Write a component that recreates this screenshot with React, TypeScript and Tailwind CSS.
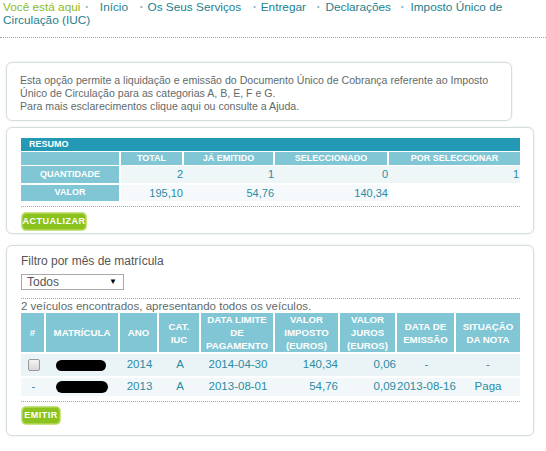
import React from "react";

const crumbs = [
  { label: "Início", pre: "ml-[5px] mr-[12px]" },
  { label: "Os Seus Serviços", pre: "ml-[12px] mr-[5px]" },
  { label: "Entregar", pre: "ml-[12px] mr-[5px]" },
  { label: "Declarações", pre: "ml-[11px] mr-[6px]" },
  { label: "Imposto Único de Circulação (IUC)", pre: "ml-[10px] mr-[7px]" },
];

const veiculos = [
  { sel: true, ano: "2014", cat: "A", limite: "2014-04-30", imposto: "140,34", juros: "0,06", emissao: "-", situacao: "-", bg: "bg-[#eaf4f7]", blob: "w-[50px] h-[11px]", h: "h-[24px]" },
  { sel: false, ano: "2013", cat: "A", limite: "2013-08-01", imposto: "54,76", juros: "0,09", emissao: "2013-08-16", situacao: "Paga", bg: "bg-[#f2f8fa]", blob: "w-[52px] h-[12px]", h: "h-[20px]" },
];

function Dotted() {
  return <div className="border-b border-dotted border-[#9aa]" />;
}

function GreenButton({ label, width }: { label: string; width: string }) {
  return (
    <div className={`${width} h-[17px] rounded-[4px] bg-[#8cc21e] ring-1 ring-[#c8e383] border border-[#a9d44a] flex items-center justify-center text-white text-[9px] font-bold tracking-[0.5px]`}>
      {label}
    </div>
  );
}

export default function App() {
  return (
    <div className="w-[546px] h-[451px] bg-white overflow-hidden font-['Liberation_Sans',sans-serif] text-[11px]">
      {/* breadcrumb */}
      <div className="px-[3px] text-[11.8px] leading-[13px] text-[#23808f]">
        <span className="text-[#8dbb1e]">Você está aqui</span>
        {crumbs.map((c) => (
          <span key={c.label}>
            <span className={`text-[7px] text-[#8ab] ${c.pre} align-[2px]`}>•</span>
            {c.label}
          </span>
        ))}
      </div>
      <div className="mt-[10px]">
        <Dotted />
      </div>

      {/* intro box */}
      <div className="ml-[6px] mt-[24px] w-[506px] rounded-[6px] border border-[#d4dede] shadow-[0_0_2px_rgba(0,0,0,0.12)] pl-[13px] pr-[6px] pt-[11px] pb-[7px] text-[10.6px] leading-[13px] text-[#5f6b6b]">
        Esta opção permite a liquidação e emissão do Documento Único de Cobrança referente ao Imposto Único de Circulação para as categorias A, B, E, F e G.
        <br />
        Para mais esclarecimentos clique aqui ou consulte a Ajuda.
      </div>

      {/* resumo box */}
      <div className="ml-[6px] mt-[6px] w-[528px] rounded-[6px] border border-[#d4dede] shadow-[0_0_2px_rgba(0,0,0,0.12)] pl-[14px] pr-[13px] pt-[10px] pb-[3px]">
        <div className="h-[13px] bg-[#2399b6] text-white text-[9px] font-bold pl-[8px] leading-[13px]">RESUMO</div>
        <table className="w-[499px] border-separate border-spacing-0 mt-[1px] text-[11px]">
          <thead>
            <tr className="h-[13px] text-[9px] font-bold text-white leading-[13px]">
              <th className="w-[100px] bg-[#80c6d4] border-r-2 border-white"></th>
              <th className="w-[63px] bg-[#80c6d4] border-r-2 border-white">TOTAL</th>
              <th className="w-[91px] bg-[#80c6d4] border-r-2 border-white">JÁ EMITIDO</th>
              <th className="w-[114px] bg-[#80c6d4] border-r-2 border-white">SELECCIONADO</th>
              <th className="bg-[#80c6d4]">POR SELECCIONAR</th>
            </tr>
          </thead>
          <tbody className="text-[#2a8ba3] text-right">
            <tr className="h-[17px]">
              <td className="bg-[#80c6d4] text-white text-center text-[9px] font-bold border-r-2 border-white border-t border-t-white">QUANTIDADE</td>
              <td className="bg-[#eef6f8] pr-[1px] border-t border-t-white">2</td>
              <td className="bg-[#eef6f8] pr-[1px] border-t border-t-white">1</td>
              <td className="bg-[#eef6f8] pr-[1px] border-t border-t-white">0</td>
              <td className="bg-[#eef6f8] pr-[1px] border-t border-t-white">1</td>
            </tr>
            <tr className="h-[18px]">
              <td className="bg-[#80c6d4] text-white text-center text-[9px] font-bold border-r-2 border-white border-t-2 border-t-white">VALOR</td>
              <td className="bg-[#f5f9fb] pr-[1px] border-t-2 border-t-white">195,10</td>
              <td className="bg-[#f5f9fb] pr-[1px] border-t-2 border-t-white">54,76</td>
              <td className="bg-[#f5f9fb] pr-[1px] border-t-2 border-t-white">140,34</td>
              <td className="border-t-2 border-t-white"></td>
            </tr>
          </tbody>
        </table>
        <div className="mt-[5px] w-[499px]">
          <Dotted />
        </div>
        <div className="mt-[6px] pl-[1px]">
          <GreenButton label="ACTUALIZAR" width="w-[64px]" />
        </div>
      </div>

      {/* veiculos box */}
      <div className="ml-[6px] mt-[11px] w-[528px] rounded-[6px] border border-[#d4dede] shadow-[0_0_2px_rgba(0,0,0,0.12)] pl-[14px] pr-[13px] pt-[9px] pb-[11px]">
        <div className="text-[12px] leading-[13px] text-[#555]">Filtro por mês de matrícula</div>
        <div className="mt-[6px] w-[103px] h-[16px] border border-[#aaa] flex items-center justify-between pl-[5px] pr-[6px] text-[12px] text-[#555]">
          <span>Todos</span>
          <span className="text-[8px] text-black">▼</span>
        </div>
        <div className="mt-[8px] w-[499px]">
          <Dotted />
        </div>
        <div className="mt-[1px] text-[11.5px] leading-[13px] text-[#5f6b6b]">
          2 veículos encontrados, apresentando todos os veículos.
        </div>
        <table className="w-[499px] border-separate border-spacing-0 mt-0 text-[11.5px]">
          <thead>
            <tr className="h-[39px] text-[9.7px] font-bold text-white leading-[13px] text-center">
              <th className="w-[25px] bg-[#80c6d4] border-r-2 border-white">#</th>
              <th className="w-[74px] bg-[#80c6d4] border-r-2 border-white">MATRÍCULA</th>
              <th className="w-[39px] bg-[#80c6d4] border-r-2 border-white">ANO</th>
              <th className="w-[42px] bg-[#80c6d4] border-r-2 border-white">CAT.<br />IUC</th>
              <th className="w-[74px] bg-[#80c6d4] border-r-2 border-white">DATA LIMITE<br />DE<br />PAGAMENTO</th>
              <th className="w-[65px] bg-[#80c6d4] border-r-2 border-white">VALOR<br />IMPOSTO<br />(EUROS)</th>
              <th className="w-[57px] bg-[#80c6d4] border-r-2 border-white">VALOR<br />JUROS<br />(EUROS)</th>
              <th className="w-[59px] bg-[#80c6d4] border-r-2 border-white">DATA DE<br />EMISSÃO</th>
              <th className="bg-[#80c6d4]">SITUAÇÃO<br />DA NOTA</th>
            </tr>
          </thead>
          <tbody className="text-[#2a8ba3]">
            {veiculos.map((v, i) => (
              <tr key={i} className={`${v.h} ${v.bg}`}>
                <td className="text-center border-t-2 border-t-white">
                  {v.sel ? (
                    <div className="mx-auto w-[12px] h-[12px] rounded-[2px] border border-[#999] bg-gradient-to-b from-[#f4f4f4] to-[#d8d8d8]" />
                  ) : (
                    "-"
                  )}
                </td>
                <td className="border-t-2 border-t-white">
                  <div className={`ml-[10px] ${v.blob} rounded-full bg-black`} />
                </td>
                <td className="text-center border-t-2 border-t-white">{v.ano}</td>
                <td className="text-center border-t-2 border-t-white">{v.cat}</td>
                <td className="text-center border-t-2 border-t-white">{v.limite}</td>
                <td className="text-right pr-[2px] border-t-2 border-t-white">{v.imposto}</td>
                <td className="text-right pr-[1px] border-t-2 border-t-white">{v.juros}</td>
                <td className="text-center border-t-2 border-t-white">{v.emissao}</td>
                <td className="text-center border-t-2 border-t-white">{v.situacao}</td>
              </tr>
            ))}
          </tbody>
        </table>
        <div className="mt-[5px] w-[499px]">
          <Dotted />
        </div>
        <div className="mt-[5px] pl-[1px]">
          <GreenButton label="EMITIR" width="w-[38px]" />
        </div>
      </div>
    </div>
  );
}
